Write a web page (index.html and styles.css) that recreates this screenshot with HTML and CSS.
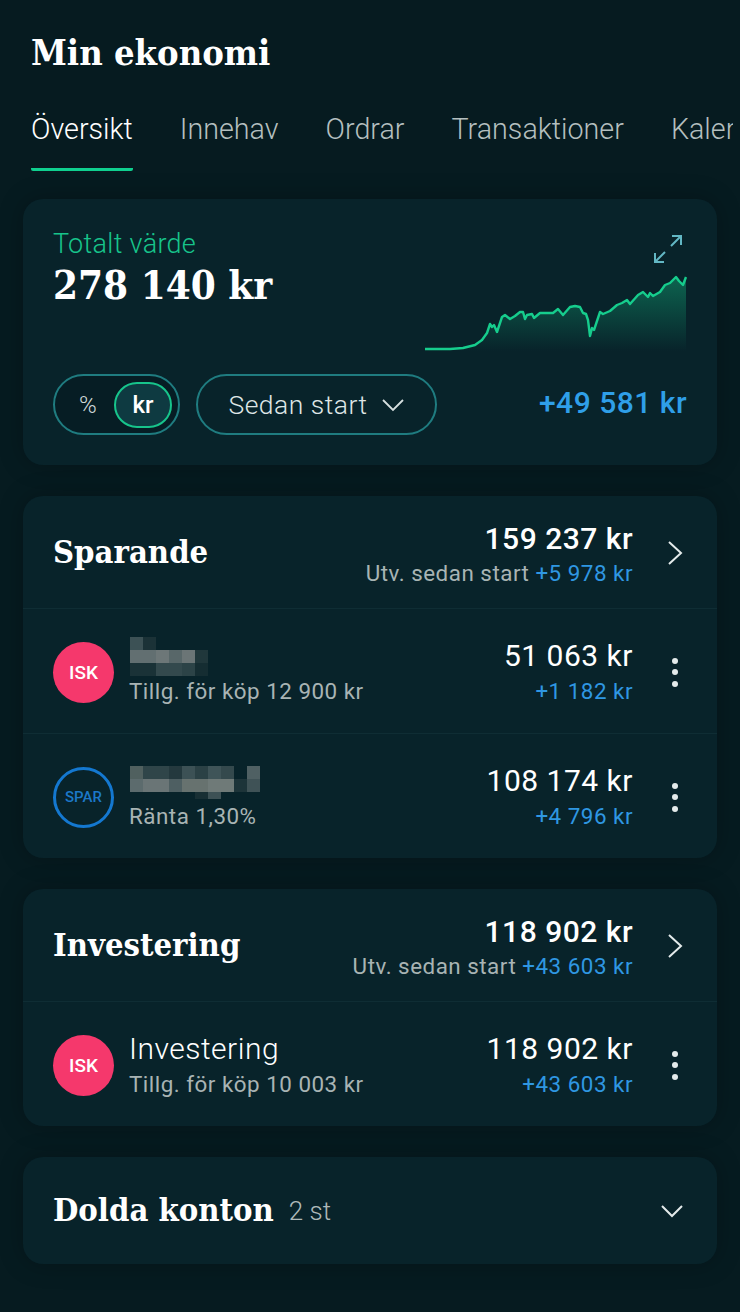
FILE: index.html
```html
<!DOCTYPE html>
<html lang="sv">
	<head>
		<meta charset="utf-8" />
		<title>Min ekonomi</title>
		<link rel="stylesheet" href="styles.css">
	</head>
	<body>
		<div class="page">
			<h1 class="page-title">Min ekonomi</h1>
			<div class="tabs">
				<div class="tab tab-active">Översikt</div>
				<div class="tab">Innehav</div>
				<div class="tab">Ordrar</div>
				<div class="tab">Transaktioner</div>
				<div class="tab">Kalender</div>
			</div>

			<div class="card total">
				<div class="total-top">
					<div>
						<div class="total-label">Totalt värde</div>
						<div class="total-value">278 140 kr</div>
					</div>
					<div class="total-graph">
						<svg class="expand" width="28" height="28" viewBox="0 0 28 28" fill="none" stroke="#62b7c4" stroke-width="2">
							<path d="M18 1h9v9M27 1L17 11"/>
							<path d="M1 18v9h9M1 27l10-10"/>
						</svg>
						<svg class="chart" width="262" height="78" viewBox="0 0 262 78" fill="none">
							<defs>
								<linearGradient id="chartfill" gradientUnits="userSpaceOnUse" x1="0" y1="0" x2="0" y2="76">
									<stop offset="0" stop-color="#12a877" stop-opacity="0.5"/>
									<stop offset="1" stop-color="#12a877" stop-opacity="0"/>
								</linearGradient>
							</defs>
							<path fill="url(#chartfill)" d="M0 74 25 74 38 73 50 70 57 65 62 58 65 49 67 52 69 50 72 57 77 42 80 40 85 44 90 41 95 37 98 37 100 44 102 40 107 39 109 43 115 38 122 38 128 38 133 34 138 40 145 32 150 31 155 32 158 38 161 39 163 45 165 61 167 53 169 55 175 37 178 39 185 36 192 30 197 28 202 25 205 29 213 20 218 17 223 22 225 18 228 21 235 17 240 10 245 8 251 2 254 6 258 10 261 2V78H0Z"/>
							<path stroke="#16cd8d" stroke-width="2.4" stroke-linejoin="round" d="M0 74 25 74 38 73 50 70 57 65 62 58 65 49 67 52 69 50 72 57 77 42 80 40 85 44 90 41 95 37 98 37 100 44 102 40 107 39 109 43 115 38 122 38 128 38 133 34 138 40 145 32 150 31 155 32 158 38 161 39 163 45 165 61 167 53 169 55 175 37 178 39 185 36 192 30 197 28 202 25 205 29 213 20 218 17 223 22 225 18 228 21 235 17 240 10 245 8 251 2 254 6 258 10 261 2"/>
						</svg>
					</div>
				</div>
				<div class="total-controls">
					<div class="toggle">
						<span class="toggle-opt">%</span>
						<span class="toggle-opt toggle-on">kr</span>
					</div>
					<div class="period">
						Sedan start
						<svg width="24" height="14" viewBox="0 0 24 14" fill="none" stroke="#d6dfdf" stroke-width="1.8"><path d="M2 2l10 10L22 2"/></svg>
					</div>
					<div class="total-change">+49 581 kr</div>
				</div>
			</div>

			<div class="card">
				<div class="group-head">
					<div class="group-title">Sparande</div>
					<div class="amounts amounts-head">
						<div class="amount-big">159 237 kr</div>
						<div class="sub">Utv. sedan start <span class="plus">+5 978 kr</span></div>
					</div>
					<div class="side">
						<svg width="18" height="26" viewBox="0 0 18 26" fill="none" stroke="#e4ebeb" stroke-width="2"><path d="M3 2l12 11L3 24"/></svg>
					</div>
				</div>
				<div class="row">
					<div class="badge badge-isk">ISK</div>
					<div class="row-text">
						<svg class="blur" width="80" height="39" viewBox="0 0 80 39">
							<rect x="0" y="0" width="13" height="13" fill="#3c5155"/><rect x="13" y="0" width="13" height="13" fill="#1b3237"/>
							<rect x="0" y="13" width="26" height="13" fill="#626f71"/><rect x="26" y="13" width="13" height="13" fill="#6d7778"/><rect x="39" y="13" width="13" height="13" fill="#586769"/><rect x="52" y="13" width="13" height="13" fill="#6b7576"/><rect x="65" y="13" width="13" height="13" fill="#20373b"/>
							<rect x="0" y="26" width="26" height="13" fill="#1a3237"/><rect x="26" y="26" width="26" height="13" fill="#33494d"/><rect x="52" y="26" width="13" height="13" fill="#2c4347"/><rect x="65" y="26" width="13" height="13" fill="#152d32"/>
						</svg>
						<div class="sub">Tillg. för köp 12 900 kr</div>
					</div>
					<div class="amounts">
						<div class="amount">51 063 kr</div>
						<div class="sub plus">+1 182 kr</div>
					</div>
					<div class="side"><div class="dots"><i></i><i></i><i></i></div></div>
				</div>
				<div class="row">
					<div class="badge badge-spar">SPAR</div>
					<div class="row-text">
						<svg class="blur blur-low" width="132" height="33" viewBox="0 0 132 33">
							<rect x="0" y="0" width="13" height="13" fill="#50605f"/><rect x="13" y="0" width="26" height="13" fill="#2f4549"/><rect x="39" y="0" width="13" height="13" fill="#24393e"/><rect x="52" y="0" width="13" height="13" fill="#3c5155"/><rect x="65" y="0" width="13" height="13" fill="#2b4145"/><rect x="78" y="0" width="13" height="13" fill="#3f5458"/><rect x="91" y="0" width="13" height="13" fill="#34494d"/><rect x="117" y="0" width="13" height="13" fill="#4f6063"/>
							<rect x="0" y="13" width="13" height="13" fill="#5c6b6d"/><rect x="13" y="13" width="26" height="13" fill="#6a7576"/><rect x="39" y="13" width="13" height="13" fill="#4e5f62"/><rect x="52" y="13" width="26" height="13" fill="#67726f"/><rect x="78" y="13" width="26" height="13" fill="#6f7a78"/><rect x="104" y="13" width="13" height="13" fill="#1d3439"/><rect x="117" y="13" width="13" height="13" fill="#3f5256"/>
							<rect x="65" y="26" width="13" height="7" fill="#182f34"/><rect x="78" y="26" width="13" height="7" fill="#3d5155"/>
						</svg>
						<div class="sub">Ränta 1,30%</div>
					</div>
					<div class="amounts">
						<div class="amount">108 174 kr</div>
						<div class="sub plus">+4 796 kr</div>
					</div>
					<div class="side"><div class="dots"><i></i><i></i><i></i></div></div>
				</div>
			</div>

			<div class="card">
				<div class="group-head">
					<div class="group-title">Investering</div>
					<div class="amounts amounts-head">
						<div class="amount-big">118 902 kr</div>
						<div class="sub">Utv. sedan start <span class="plus">+43 603 kr</span></div>
					</div>
					<div class="side">
						<svg width="18" height="26" viewBox="0 0 18 26" fill="none" stroke="#e4ebeb" stroke-width="2"><path d="M3 2l12 11L3 24"/></svg>
					</div>
				</div>
				<div class="row">
					<div class="badge badge-isk">ISK</div>
					<div class="row-text">
						<div class="row-name">Investering</div>
						<div class="sub">Tillg. för köp 10 003 kr</div>
					</div>
					<div class="amounts">
						<div class="amount">118 902 kr</div>
						<div class="sub plus">+43 603 kr</div>
					</div>
					<div class="side"><div class="dots"><i></i><i></i><i></i></div></div>
				</div>
			</div>

			<div class="card hidden-accounts">
				<div class="group-title">Dolda konton</div>
				<div class="hidden-count">2 st</div>
				<svg width="24" height="16" viewBox="0 0 24 16" fill="none" stroke="#e4ebeb" stroke-width="2"><path d="M2 3l10 10L22 3"/></svg>
			</div>
		</div>
	</body>
</html>
```

FILE: styles.css
```css
html,body{
	margin: 0;
	padding: 0;
	background-color: #061b20;
}
body{
	width: 740px;
	height: 1312px;
	overflow: hidden;
	font-family: Roboto, "Noto Sans", sans-serif;
	color: #FFFFFF;
}
.page{
	padding: 0 23px;
}
.page-title{
	margin: 0;
	padding: 30px 0 0 8px;
	height: 70px;
	box-sizing: border-box;
	font-family: "DejaVu Serif Condensed", "DejaVu Serif", serif;
	font-size: 36px;
	line-height: 44px;
	font-weight: bold;
}
.tabs{
	display: flex;
	gap: 47px;
	margin: 0 -16px 0 8px;
	overflow: hidden;
	height: 101px;
	box-sizing: border-box;
	padding-top: 41px;
}
.tab{
	flex: none;
	height: 57px;
	font-size: 28.7px;
	line-height: 36px;
	font-weight: 300;
	color: #b4bfbf;
}
.tab-active{
	color: #FFFFFF;
	border-bottom: 3px solid #0fd08f;
	border-radius: 0 0 2px 2px;
}
.card{
	background-color: #08232a;
	border-radius: 20px;
	margin-top: 31px;
	box-shadow: 0 0 24px rgba(0,0,0,0.25);
}
.total{
	margin-top: 28px;
	height: 266px;
	box-sizing: border-box;
	padding: 30px 30px 0;
}
.total-top{
	display: flex;
	justify-content: space-between;
	height: 145px;
}
.total-label{
	color: #17c48b;
	font-size: 27px;
	line-height: 30px;
	font-weight: 300;
	letter-spacing: 0.3px;
}
.total-value{
	margin-top: 3px;
	font-family: "DejaVu Serif Condensed", "DejaVu Serif", serif;
	font-weight: bold;
	font-size: 40px;
	line-height: 46px;
}
.total-graph{
	display: flex;
	flex-direction: column;
	align-items: flex-end;
	margin-top: 6px;
}
.expand{
	margin: 0 5px 12px 0;
}
.total-controls{
	display: flex;
	align-items: center;
	gap: 16px;
}
.toggle{
	display: flex;
	align-items: center;
	justify-content: space-between;
	width: 127px;
	height: 61px;
	box-sizing: border-box;
	padding: 0 6px 0 24px;
	border: 2px solid #1f7c80;
	border-radius: 31px;
	background-color: #061d24;
}
.toggle-opt{
	font-size: 24px;
	color: #d0dada;
	font-weight: 300;
}
.toggle-on{
	width: 58px;
	height: 46px;
	box-sizing: border-box;
	border: 2px solid #17c48b;
	border-radius: 23px;
	background-color: #0e3a41;
	text-align: center;
	line-height: 42px;
	font-weight: 500;
	color: #FFFFFF;
}
.period{
	display: flex;
	align-items: center;
	justify-content: center;
	gap: 13px;
	width: 241px;
	height: 61px;
	box-sizing: border-box;
	border: 2px solid #1f7c80;
	border-radius: 31px;
	font-size: 26.5px;
	font-weight: 300;
	letter-spacing: 0.5px;
	color: #dfe6e6;
}
.total-change{
	margin-left: auto;
	margin-bottom: 5px;
	font-size: 30px;
	font-weight: 500;
	letter-spacing: 0.5px;
	color: #2f9fe8;
}
.group-head,.row{
	display: flex;
	align-items: center;
	padding-left: 30px;
}
.group-head{
	height: 112px;
	justify-content: space-between;
}
.group-title{
	font-family: "DejaVu Serif Condensed", "DejaVu Serif", serif;
	font-weight: bold;
	font-size: 32.5px;
	margin-top: -2px;
}
.row{
	height: 125px;
	box-sizing: border-box;
	border-top: 1px solid #0f2d34;
}
.amounts{
	margin-left: auto;
	padding-top: 2px;
	text-align: right;
}
.amounts-head{
	padding-top: 4px;
}
.amount-big{
	font-size: 30px;
	line-height: 37px;
	font-weight: 500;
	letter-spacing: 0.5px;
}
.amount{
	font-size: 30px;
	line-height: 38px;
	font-weight: 400;
	letter-spacing: 0.5px;
}
.sub{
	font-size: 22.4px;
	line-height: 32px;
	font-weight: 400;
	letter-spacing: 0.5px;
	color: #a8b4b4;
}
.plus{
	color: #2f97e2;
}
.side{
	flex: none;
	width: 84px;
	display: flex;
	justify-content: center;
	padding-top: 2px;
}
.badge{
	flex: none;
	width: 61px;
	height: 61px;
	margin-top: 2px;
	box-sizing: border-box;
	border-radius: 50%;
	display: flex;
	align-items: center;
	justify-content: center;
	font-weight: 500;
}
.badge-isk{
	background-color: #f5386c;
	font-size: 19px;
}
.badge-spar{
	border: 3.5px solid #1478d0;
	color: #1c78c8;
	font-size: 15px;
}
.row-text{
	margin-left: 15px;
	padding-top: 2px;
}
.row-name{
	font-size: 30px;
	line-height: 38px;
	font-weight: 300;
	letter-spacing: 0.5px;
}
.blur{
	display: block;
	margin: 0 0 -1px 1px;
}
.blur-low{
	margin: 4px 0 1px 1px;
}
.dots{
	display: flex;
	flex-direction: column;
	gap: 5.5px;
}
.dots i{
	width: 6px;
	height: 6px;
	border-radius: 50%;
	background-color: #e4ebeb;
}
.hidden-accounts{
	display: flex;
	align-items: center;
	height: 107px;
	padding: 0 33px 0 30px;
}
.hidden-count{
	margin-left: 15px;
	font-size: 26px;
	font-weight: 300;
	color: #aeb9b9;
}
.hidden-accounts svg{
	margin-left: auto;
}
```
